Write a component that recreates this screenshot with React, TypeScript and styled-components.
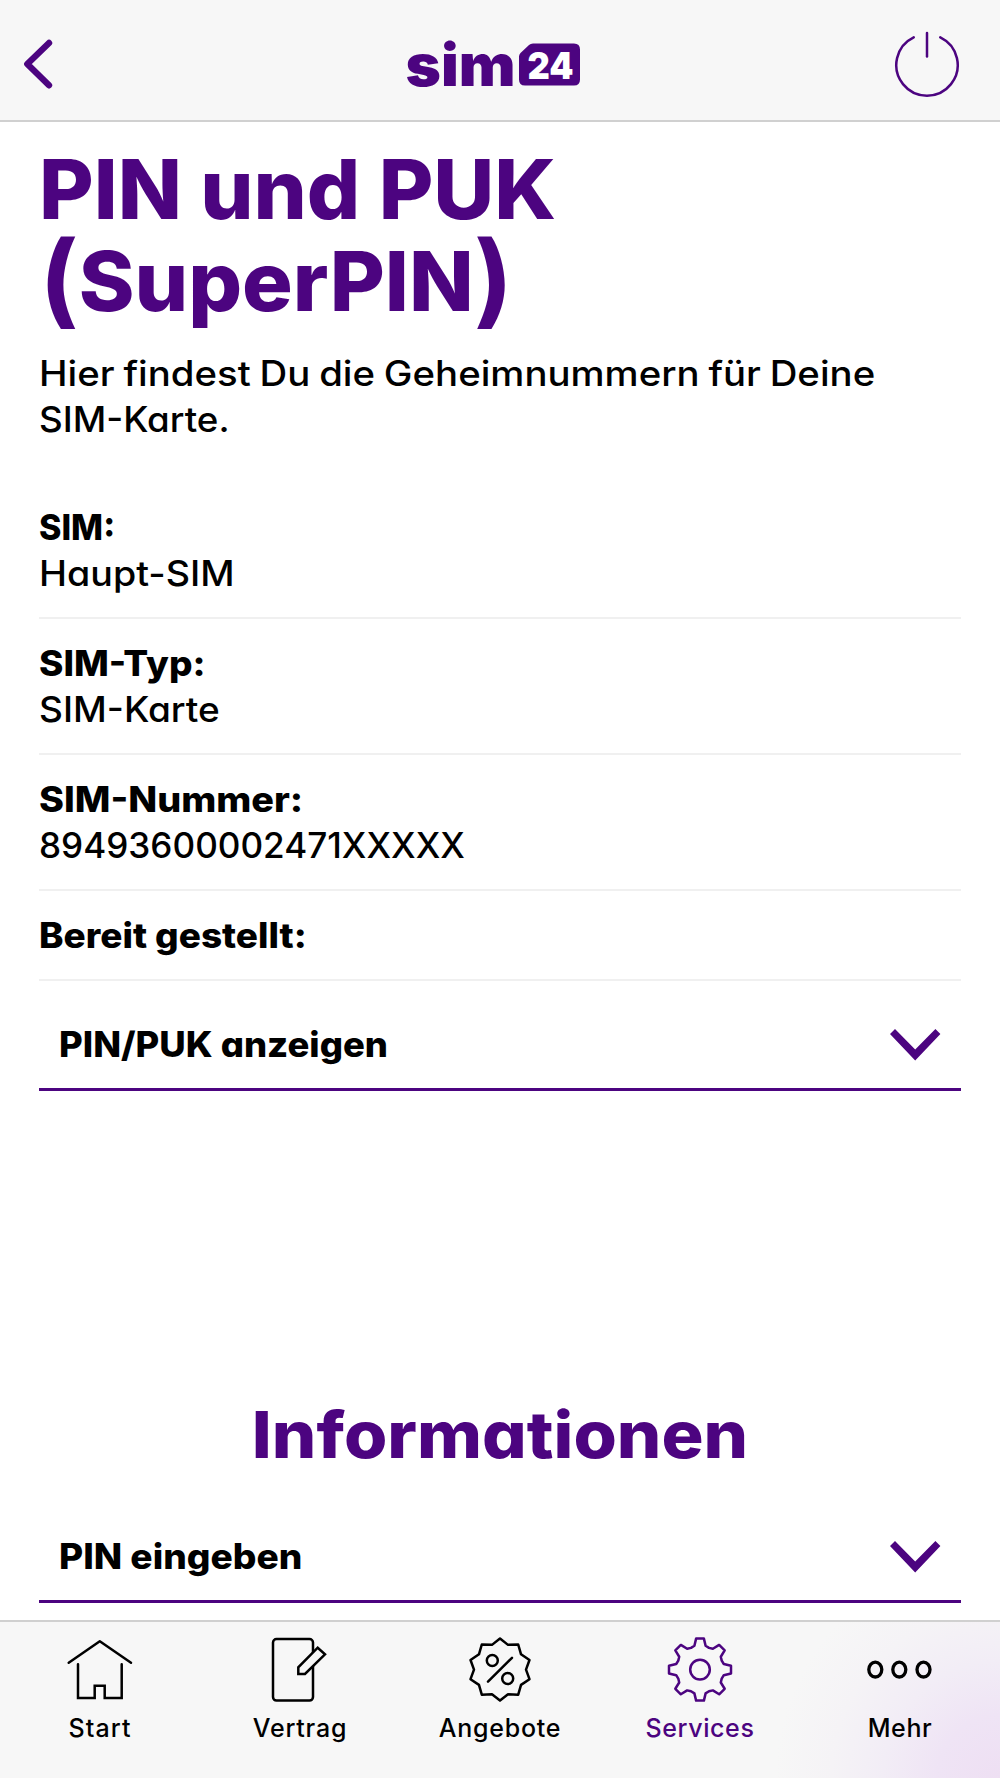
import React from "react";
import styled, { createGlobalStyle } from "styled-components";

const purple = "#4c0480";

const GlobalStyle = createGlobalStyle`
  * { box-sizing: border-box; }
  body { margin: 0; background: #fff; }
`;

const Page = styled.div`
  display: flex;
  flex-direction: column;
  width: 1000px;
  height: 1778px;
  overflow: hidden;
  background: #fff;
  color: #000;
  font-family: Inter, "Open Sans", sans-serif;
  font-feature-settings: "cv11" 1;
  font-kerning: normal;
`;

const Header = styled.header`
  display: grid;
  grid-template-columns: 1fr auto 1fr;
  align-items: center;
  flex: none;
  height: 122px;
  padding: 8px 40px 0 23px;
  background: #f7f7f7;
  border-bottom: 2px solid #d0d0d0;
`;

const IconButton = styled.button<{ $end?: boolean }>`
  display: flex;
  padding: 0;
  border: 0;
  background: none;
  color: ${purple};
  justify-self: ${(p) => (p.$end ? "end" : "start")};
`;

const Logo = styled.svg`
  display: block;
  overflow: visible;
  fill: ${purple};
  margin-left: 4px;
  font-family: Inter, sans-serif;
`;

const Main = styled.main`
  flex: 1;
  min-height: 0;
  overflow: hidden;
  padding: 21.5px 39px 0;
`;

const Title = styled.h1`
  margin: 0 0 22px;
  color: ${purple};
  font-size: 82px;
  line-height: 92px;
  font-weight: 800;
`;

const Paren = styled.span`
  font-size: 102px;
  line-height: 0;
  font-weight: 700;
  vertical-align: -4px;
`;

const Line = styled.span<{ $stretch?: number; $center?: boolean; $word?: number }>`
  display: block;
  width: max-content;
  margin: ${(p) => (p.$center ? "0 auto" : "0")};
  white-space: nowrap;
  word-spacing: ${(p) => p.$word ?? 0}px;
  transform: scaleX(${(p) => p.$stretch ?? 1});
  transform-origin: ${(p) => (p.$center ? "center" : "left")};
`;

const Intro = styled.p`
  margin: 0 0 40.5px;
  font-size: 35px;
  line-height: 46.5px;
  font-weight: 500;
`;

const Details = styled.dl`
  margin: 0;
`;

const Detail = styled.div`
  padding: 20.5px 0;
  border-bottom: 2px solid #f0f0f0;
  font-size: 35px;
  line-height: 46.5px;
`;

const Term = styled.dt`
  font-weight: 800;
`;

const Value = styled.dd`
  margin: 0;
  font-weight: 450;
`;

const AccordionRow = styled.div<{ $top: number }>`
  display: flex;
  align-items: center;
  justify-content: space-between;
  height: 91px;
  margin-top: ${(p) => p.$top}px;
  padding: 0 21px 0 20px;
  border-bottom: 3px solid ${purple};
  font-size: 35px;
  font-weight: 800;
`;

const ChevronIcon = styled.svg`
  display: block;
  margin-top: 2px;
  overflow: visible;
  fill: ${purple};
`;

const Heading = styled.h2`
  margin: 306px 0 0;
  color: ${purple};
  font-size: 65px;
  line-height: 76px;
  font-weight: 800;
`;

const TabBar = styled.nav`
  display: grid;
  grid-template-columns: repeat(5, 1fr);
  flex: none;
  height: 158px;
  border-top: 2px solid #d0d0d0;
  background:
    radial-gradient(ellipse 225px 225px at 100% 100%, #eedff3 0%, #efe4f5 28%, #f2edf6 52%, #f5f3f6 75%, #f7f7f7 100%);
`;

const Tab = styled.a<{ $active?: boolean; $track?: number }>`
  display: flex;
  flex-direction: column;
  align-items: center;
  gap: 10px;
  padding-top: 15px;
  color: ${(p) => (p.$active ? purple : "#000")};
  font-size: 25px;
  line-height: 34px;
  font-weight: 500;
  font-feature-settings: normal;
  letter-spacing: ${(p) => p.$track ?? 0}px;
`;

const TabIcon = styled.svg`
  display: block;
  overflow: visible;
  fill: none;
  stroke: currentColor;
  stroke-width: 2.5;
  stroke-linecap: round;
  stroke-linejoin: round;
`;

type Point = [number, number];

const polar = (radius: number, degrees: number): Point => {
  const a = (degrees * Math.PI) / 180;
  return [32 + radius * Math.sin(a), 32.6 - radius * Math.cos(a)];
};

const toPoints = (points: Point[]) =>
  points.map(([x, y]) => `${x.toFixed(2)},${y.toFixed(2)}`).join(" ");

const badgePoints = toPoints(
  Array.from({ length: 20 }, (_, i) => polar(i % 2 ? 26 : 31, i * 18))
);

const gearTooth: Point[] = [
  [-5.6, -23.8],
  [-3.9, -31],
  [3.9, -31],
  [5.6, -23.8],
  [9, -21.7],
];

const gearPoints = toPoints(
  Array.from({ length: 8 }, (_, i) =>
    gearTooth.map(([x, y]): Point => {
      const a = (i * Math.PI) / 4;
      return [
        32 + x * Math.cos(a) - y * Math.sin(a),
        32.6 + x * Math.sin(a) + y * Math.cos(a),
      ];
    })
  ).flat()
);

const Chevron = () => (
  <ChevronIcon width="50" height="32" viewBox="0 0 50 32">
    <path d="M0 5 5 0 25.200 20.500 45.400 0 50.400 5 25.200 31.600z" />
  </ChevronIcon>
);

const Accordion = ({ label, top, stretch }: { label: string; top: number; stretch: number }) => (
  <AccordionRow $top={top}>
    <Line $stretch={stretch}>{label}</Line>
    <Chevron />
  </AccordionRow>
);

const tabs = [
  {
    label: "Start",
    track: 1.1,
    icon: (
      <>
        <path d="M.7 25.7 31.8 4.3 63 25.7" />
        <path d="M10 27.3V61H26.7V48.7H36.7V61H53.7V27.3" strokeLinejoin="miter" />
      </>
    ),
  },
  {
    label: "Vertrag",
    track: 0.8,
    icon: (
      <>
        <rect x="5" y="2" width="40" height="61.6" rx="3.5" />
        <path d="M30.3 37V30.3L49.7 10.7 57 17.3 37 37z" fill="#f7f7f7" strokeLinejoin="miter" />
      </>
    ),
  },
  {
    label: "Angebote",
    track: 0.75,
    icon: (
      <>
        <polygon points={badgePoints} />
        <circle cx="24.3" cy="23.6" r="5.5" />
        <circle cx="39.7" cy="41.6" r="5.5" />
        <path d="M44 20.8 20 44.6" />
      </>
    ),
  },
  {
    label: "Services",
    track: 0.6,
    active: true,
    icon: (
      <>
        <polygon points={gearPoints} />
        <circle cx="32" cy="32.6" r="9.8" />
      </>
    ),
  },
  {
    label: "Mehr",
    track: 0.6,
    icon: (
      <g strokeWidth="3.3">
        <ellipse cx="7.3" cy="32.6" rx="6.5" ry="7.4" />
        <ellipse cx="31.3" cy="32.6" rx="6.5" ry="7.4" />
        <ellipse cx="55.5" cy="32.6" rx="6.5" ry="7.4" />
      </g>
    ),
  },
];

const details = [
  { term: "SIM:", termStretch: 0.97, value: "Haupt-SIM", valueStretch: 1.075 },
  { term: "SIM-Typ:", termStretch: 1.056, value: "SIM-Karte", valueStretch: 1.058 },
  { term: "SIM-Nummer:", termStretch: 1.08, value: "89493600002471XXXXX", valueStretch: 1.003 },
  { term: "Bereit gestellt:", termStretch: 1.056 },
];

export default function App() {
  return (
    <Page>
      <GlobalStyle />
      <Header>
        <IconButton aria-label="Zurück">
          <svg width="30" height="50" viewBox="0 0 30 50" fill="none" stroke="currentColor" strokeWidth="6.4" strokeLinecap="round" strokeLinejoin="round">
            <path d="M26 4 4.3 25 26 46.3" />
          </svg>
        </IconButton>
        <Logo width="176" height="50" viewBox="0 -4 176 50" role="img" aria-label="sim24">
          <text x="-0.500" y="42.500" fontSize="58" fontWeight="900" textLength="110" lengthAdjust="spacingAndGlyphs">sim</text>
          <path d="M127 .5H168Q174 .5 174 6.500V36.500Q174 42.500 168 42.500H119Q113 42.500 113 36.500V13.500Q113 11.500 114.500 10L123 2Q124.500 .5 127 .5z" />
          <text x="121.500" y="36" fontSize="37" fontWeight="900" fill="#fff" textLength="46" lengthAdjust="spacingAndGlyphs">24</text>
        </Logo>
        <IconButton $end aria-label="Abmelden">
          <svg width="66" height="66" viewBox="0 0 66 66" fill="none" stroke="currentColor" strokeWidth="2.5" strokeLinecap="round">
            <path d="M19.700 6.300A30.700 30.700 0 1 0 46.300 6.300" />
            <path d="M33 2V25.500" />
          </svg>
        </IconButton>
      </Header>
      <Main>
        <Title>
          <Line $stretch={1.023}>PIN und PUK</Line>
          <Line $stretch={1.031}>
            <Paren>(</Paren>SuperPIN<Paren>)</Paren>
          </Line>
        </Title>
        <Intro>
          <Line $stretch={1.096} $word={-1.3}>Hier findest Du die Geheimnummern für Deine</Line>
          <Line $stretch={1.05}>SIM-Karte.</Line>
        </Intro>
        <Details>
          {details.map((d) => (
            <Detail key={d.term}>
              <Term>
                <Line $stretch={d.termStretch}>{d.term}</Line>
              </Term>
              {d.value && (
                <Value>
                  <Line $stretch={d.valueStretch}>{d.value}</Line>
                </Value>
              )}
            </Detail>
          ))}
        </Details>
        <Accordion label="PIN/PUK anzeigen" top={19.5} stretch={1.041} />
        <Heading>
          <Line $stretch={1.079} $center>Informationen</Line>
        </Heading>
        <Accordion label="PIN eingeben" top={38.5} stretch={1.061} />
      </Main>
      <TabBar>
        {tabs.map((t) => (
          <Tab key={t.label} $active={t.active} $track={t.track}>
            <TabIcon width="64" height="64" viewBox="0 0 64 64">{t.icon}</TabIcon>
            {t.label}
          </Tab>
        ))}
      </TabBar>
    </Page>
  );
}
